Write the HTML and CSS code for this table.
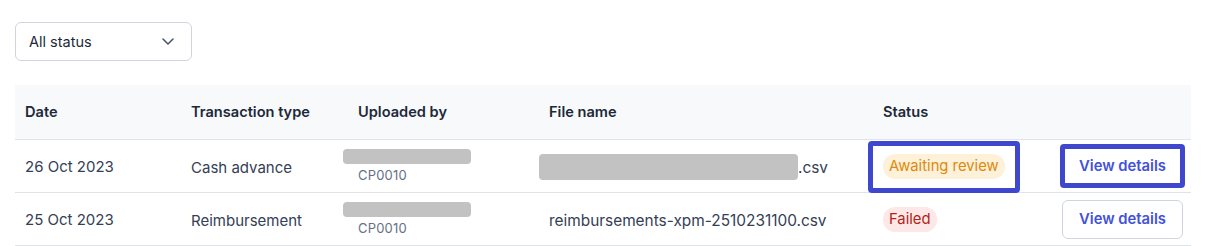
FILE: index.html
```html
<!DOCTYPE html>
<html lang="en">
<head>
<meta charset="utf-8">
<title>Uploads</title>
<link rel="stylesheet" href="styles.css">
</head>
<body>
<div class="page">
  <div class="filter">
    <span class="filter-label">All status</span>
    <svg class="chev" width="12" height="7" viewBox="0 0 12 7"><path d="M1 1l5 5 5-5" fill="none" stroke="#475467" stroke-width="1.5" stroke-linecap="round" stroke-linejoin="round"/></svg>
  </div>

  <div class="table">
    <div class="row head">
      <div class="cell">Date</div>
      <div class="cell">Transaction type</div>
      <div class="cell">Uploaded by</div>
      <div class="cell">File name</div>
      <div class="cell">Status</div>
      <div class="cell"></div>
    </div>
    <div class="row">
      <div class="cell">26 Oct 2023</div>
      <div class="cell type">Cash advance</div>
      <div class="cell user">
        <span class="redact-name"></span>
        <span class="code">CP0010</span>
      </div>
      <div class="cell file"><span class="redact-file"></span>.csv</div>
      <div class="cell status"><span class="badge awaiting">Awaiting review</span><span class="mark mark-status"></span></div>
      <div class="cell action"><button class="btn">View details</button><span class="mark mark-btn"></span></div>
    </div>
    <div class="row">
      <div class="cell">25 Oct 2023</div>
      <div class="cell type">Reimbursement</div>
      <div class="cell user">
        <span class="redact-name"></span>
        <span class="code">CP0010</span>
      </div>
      <div class="cell file">reimbursements-xpm-2510231100.csv</div>
      <div class="cell status"><span class="badge failed">Failed</span></div>
      <div class="cell action"><button class="btn">View details</button></div>
    </div>
  </div>
</div>
</body>
</html>
```

FILE: styles.css
```css
* { box-sizing: border-box; }
body {
  margin: 0;
  background: #ffffff;
  font-family: Inter, "Noto Sans", sans-serif;
  color: #344054;
}
.page {
  padding: 22px 25px 0 15px;
  display: flex;
  flex-direction: column;
  gap: 24px;
}
.filter {
  width: 177px;
  height: 39px;
  border: 1px solid #d0d5dd;
  border-radius: 6px;
  display: flex;
  align-items: center;
  justify-content: space-between;
  padding: 0 17px 0 13px;
  font-size: 14.5px;
  color: #1d2939;
}
.chev { display: block; }
.table {
  width: 1176px;
  display: flex;
  flex-direction: column;
}
.row {
  display: grid;
  grid-template-columns: 166px 167px 191px 334px 177px 141px;
  height: 53px;
  border-bottom: 1px solid #dfe3ea;
}
.row.head {
  height: 55px;
  background: #f8f9fb;
  font-weight: 600;
  color: #1d2939;
}
.cell {
  display: flex;
  align-items: center;
  padding-left: 10px;
  font-size: 15px;
  position: relative;
}
.head .cell { font-size: 14.6px; }
.cell.type { padding-top: 3px; }
.cell.user {
  flex-direction: column;
  align-items: flex-start;
  justify-content: center;
  gap: 3px;
  padding-top: 0;
}
.redact-name {
  display: block;
  width: 128px;
  height: 15px;
  margin-left: -15px;
  background: #c2c2c2;
  border-radius: 4px;
}
.code {
  font-size: 13px;
  color: #667085;
  line-height: 17px;
  letter-spacing: 0.2px;
}
.cell.file { font-size: 15.4px; padding-top: 2px; }
.redact-file {
  display: inline-block;
  width: 259px;
  height: 26px;
  margin-left: -10px;
  background: #c2c2c2;
  border-radius: 4px;
}
.badge {
  display: inline-flex;
  align-items: center;
  height: 25px;
  padding: 0 6px;
  border-radius: 12px;
  font-size: 14.8px;
  line-height: 1;
}
.badge.awaiting { background: #fdf1da; color: #e0890a; }
.badge.failed { background: #fde8e8; color: #b42318; }
.cell.action {
  justify-content: flex-end;
  padding-right: 8px;
}
.btn {
  height: 39px;
  width: 121px;
  padding: 0;
  border: 1px solid #d0d5dd;
  border-radius: 6px;
  background: #ffffff;
  color: #4352d8;
  font-family: inherit;
  font-size: 14.8px;
  font-weight: 600;
}
.mark {
  position: absolute;
  border: 5px solid #3f48cc;
  border-radius: 4px;
  pointer-events: none;
}
.mark-status {
  left: -5px;
  top: 1px;
  width: 152px;
  height: 52px;
}
.mark-btn {
  right: 6px;
  top: 4px;
  width: 125px;
  height: 44px;
}
```
